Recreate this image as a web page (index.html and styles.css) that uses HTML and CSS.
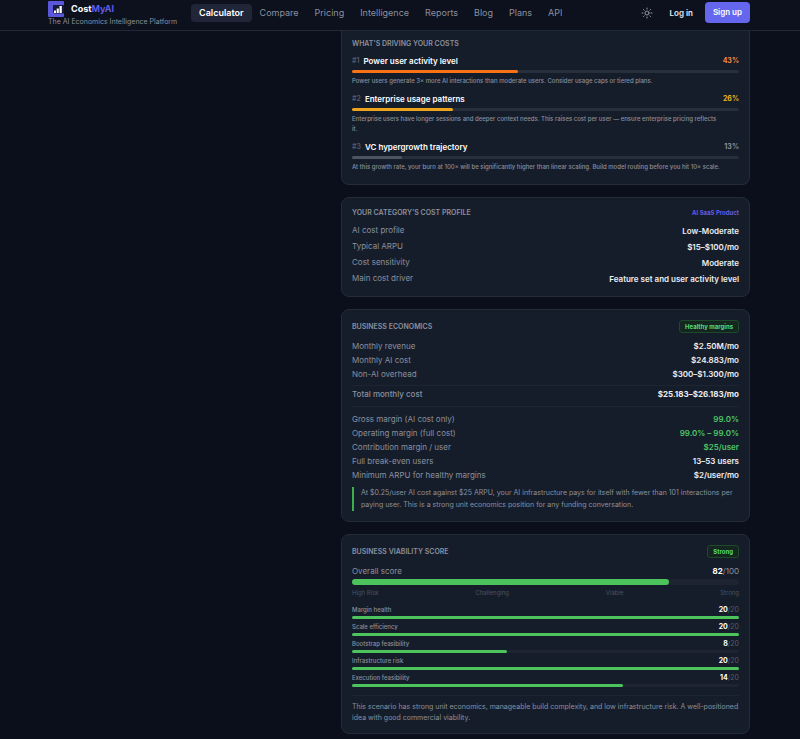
FILE: index.html
```html
<!DOCTYPE html>
<html lang="en">
<head>
    <meta charset="UTF-8">
    <meta name="viewport" content="width=device-width, initial-scale=1.0">
    <title>CostMyAI</title>
    <link rel="stylesheet" href="styles.css">
</head>
<body>

    <header class="header">
        <div class="header-inner">
            <a href="#" class="brand">
                <span class="brand-row">
                    <svg class="logo" viewBox="0 0 16 16" aria-hidden="true">
                        <rect width="16" height="16" rx="1" fill="#5b57dd"/>
                        <path d="M5 4h11v8.500H7a2 2 0 0 1-2-2z" fill="#171a38"/>
                        <path d="M6 9.500h2V12H6zM8.700 7.500h2.100V12H8.700zM11.500 5h2.300v7h-2.300z" fill="#fff"/>
                    </svg>
                    <span class="brand-name">Cost<span>MyAI</span></span>
                </span>
                <span class="tagline">The AI Economics Intelligence Platform</span>
            </a>
            <nav class="nav">
                <a href="#" class="active">Calculator</a>
                <a href="#">Compare</a>
                <a href="#">Pricing</a>
                <a href="#">Intelligence</a>
                <a href="#">Reports</a>
                <a href="#">Blog</a>
                <a href="#">Plans</a>
                <a href="#">API</a>
            </nav>
            <div class="actions">
                <button class="theme" aria-label="Toggle theme">
                    <svg viewBox="0 0 24 24" fill="none" stroke="currentColor" stroke-width="2" stroke-linecap="round">
                        <circle cx="12" cy="12" r="4"/>
                        <path d="M12 2v2M12 20v2M4.900 4.900l1.400 1.400M17.700 17.700l1.400 1.400M2 12h2M20 12h2M6.300 17.700l-1.400 1.400M19.100 4.900l-1.400 1.400"/>
                    </svg>
                </button>
                <button class="login">Log in</button>
                <button class="signup">Sign up</button>
            </div>
        </div>
    </header>

    <main class="layout">
        <div class="results">

            <section class="card card-first">
                <h2>What's driving your costs</h2>
                <div class="drivers">
                    <div class="driver orange">
                        <div class="driver-head">
                            <span class="rank">#1</span>
                            <h3>Power user activity level</h3>
                            <span class="percent">43%</span>
                        </div>
                        <div class="bar"><div class="fill" style="width: 43%"></div></div>
                        <p>Power users generate 3× more AI interactions than moderate users. Consider usage caps or tiered plans.</p>
                    </div>
                    <div class="driver amber">
                        <div class="driver-head">
                            <span class="rank">#2</span>
                            <h3>Enterprise usage patterns</h3>
                            <span class="percent">26%</span>
                        </div>
                        <div class="bar"><div class="fill" style="width: 26%"></div></div>
                        <p>Enterprise users have longer sessions and deeper context needs. This raises cost per user — ensure enterprise pricing reflects<br>it.</p>
                    </div>
                    <div class="driver grey">
                        <div class="driver-head">
                            <span class="rank">#3</span>
                            <h3>VC hypergrowth trajectory</h3>
                            <span class="percent">13%</span>
                        </div>
                        <div class="bar"><div class="fill" style="width: 13%"></div></div>
                        <p>At this growth rate, your burn at 100× will be significantly higher than linear scaling. Build model routing before you hit 10× scale.</p>
                    </div>
                </div>
            </section>

            <section class="card profile">
                <div class="card-head">
                    <h2>Your category's cost profile</h2>
                    <span class="category">AI SaaS Product</span>
                </div>
                <dl class="rows">
                    <div><dt>AI cost profile</dt><dd>Low-Moderate</dd></div>
                    <div><dt>Typical ARPU</dt><dd>$15–$100/mo</dd></div>
                    <div><dt>Cost sensitivity</dt><dd>Moderate</dd></div>
                    <div><dt>Main cost driver</dt><dd>Feature set and user activity level</dd></div>
                </dl>
            </section>

            <section class="card">
                <div class="card-head">
                    <h2>Business economics</h2>
                    <span class="badge">Healthy margins</span>
                </div>
                <dl class="rows">
                    <div><dt>Monthly revenue</dt><dd>$2.50M/mo</dd></div>
                    <div><dt>Monthly AI cost</dt><dd>$24.883/mo</dd></div>
                    <div><dt>Non-AI overhead</dt><dd>$300–$1.300/mo</dd></div>
                    <div class="total"><dt>Total monthly cost</dt><dd>$25.183–$26.183/mo</dd></div>
                    <div><dt>Gross margin (AI cost only)</dt><dd class="good">99.0%</dd></div>
                    <div><dt>Operating margin (full cost)</dt><dd class="good">99.0% – 99.0%</dd></div>
                    <div><dt>Contribution margin / user</dt><dd class="good">$25/user</dd></div>
                    <div><dt>Full break-even users</dt><dd>13–53 users</dd></div>
                    <div><dt>Minimum ARPU for healthy margins</dt><dd>$2/user/mo</dd></div>
                </dl>
                <p class="note">At $0.25/user AI cost against $25 ARPU, your AI infrastructure pays for itself with fewer than 101 interactions per paying user. This is a strong unit economics position for any funding conversation.</p>
            </section>

            <section class="card">
                <div class="card-head">
                    <h2>Business viability score</h2>
                    <span class="badge">Strong</span>
                </div>
                <div class="overall">
                    <span>Overall score</span>
                    <span><b>82</b>/100</span>
                </div>
                <div class="bar bar-big"><div class="fill" style="width: 82%"></div></div>
                <div class="scale">
                    <span>High Risk</span>
                    <span>Challenging</span>
                    <span>Viable</span>
                    <span>Strong</span>
                </div>
                <div class="scores">
                    <div class="score">
                        <div class="score-head"><span>Margin health</span><span class="points"><b>20</b>/20</span></div>
                        <div class="bar"><div class="fill" style="width: 100%"></div></div>
                    </div>
                    <div class="score">
                        <div class="score-head"><span>Scale efficiency</span><span class="points"><b>20</b>/20</span></div>
                        <div class="bar"><div class="fill" style="width: 100%"></div></div>
                    </div>
                    <div class="score">
                        <div class="score-head"><span>Bootstrap feasibility</span><span class="points"><b>8</b>/20</span></div>
                        <div class="bar"><div class="fill" style="width: 40%"></div></div>
                    </div>
                    <div class="score">
                        <div class="score-head"><span>Infrastructure risk</span><span class="points"><b>20</b>/20</span></div>
                        <div class="bar"><div class="fill" style="width: 100%"></div></div>
                    </div>
                    <div class="score">
                        <div class="score-head"><span>Execution feasibility</span><span class="points"><b>14</b>/20</span></div>
                        <div class="bar"><div class="fill" style="width: 70%"></div></div>
                    </div>
                </div>
                <p class="summary">This scenario has strong unit economics, manageable build complexity, and low infrastructure risk. A well-positioned idea with good commercial viability.</p>
            </section>

        </div>
    </main>

</body>
</html>
```
FILE: styles.css
```css
* {
    box-sizing: border-box;
    margin: 0;
    padding: 0;
}

body {
    font-family: Inter, "Liberation Sans", sans-serif;
    font-size: 8px;
    line-height: 14px;
    color: #8a909e;
    background-color: #0a0f1b;
}

a {
    color: inherit;
    text-decoration: none;
}

button {
    font: inherit;
    color: inherit;
    background: none;
    border: none;
    cursor: pointer;
}

/* Header */
.header {
    background-color: #0c111d;
    border-bottom: 1px solid #222838;
}

.header-inner {
    display: flex;
    align-items: flex-start;
    height: 30px;
    padding: 0 50px 0 48px;
}

.brand {
    display: flex;
    flex-direction: column;
    width: 143px;
    padding-top: 1px;
}

.brand-row {
    display: flex;
    align-items: center;
    gap: 7px;
}

.logo {
    width: 16px;
    height: 16px;
}

.brand-name {
    font-size: 9px;
    font-weight: 700;
    color: #fff;
}

.brand-name span {
    color: #5f5ce6;
}

.tagline {
    font-size: 7px;
    line-height: 10px;
    white-space: nowrap;
}

.nav {
    display: flex;
    padding-top: 4px;
    font-size: 9px;
    line-height: 18px;
}

.nav a {
    padding: 0 8px;
    border-radius: 4px;
}

.nav .active {
    color: #fff;
    font-weight: 600;
    background-color: #202637;
}

.actions {
    display: flex;
    align-items: center;
    gap: 12px;
    margin-left: auto;
    padding-top: 2px;
    color: #e8eaf0;
    font-weight: 600;
}

.theme {
    display: flex;
    margin-right: 4px;
    color: #9297a4;
}

.theme svg {
    width: 12px;
    height: 12px;
}

.signup {
    padding: 0 8px;
    line-height: 21px;
    color: #fff;
    background-color: #6466ee;
    border-radius: 4px;
}

/* Page */
.layout {
    display: grid;
    grid-template-columns: 278fr 409fr;
    gap: 13px;
    padding: 0 50px 6px;
}

.results {
    grid-column: 2;
    display: flex;
    flex-direction: column;
    gap: 12px;
}

.card {
    padding: 10px;
    background-color: #161d2a;
    border: 1px solid #242b39;
    border-radius: 8px;
}

/* continues up behind the header */
.card-first {
    padding-top: 8px;
    padding-bottom: 12px;
    border-top: none;
    border-radius: 0 0 8px 8px;
}

h2 {
    font-size: 7px;
    font-weight: 600;
    line-height: 10px;
    text-transform: uppercase;
}

.card-head {
    display: flex;
    justify-content: space-between;
    align-items: center;
    margin-bottom: 6px;
}

.bar {
    height: 3px;
    background-color: #272e3c;
    border-radius: 3px;
}

.fill {
    height: 100%;
    background-color: #4cc35b;
    border-radius: 3px;
}

/* Cost drivers */
.drivers {
    display: flex;
    flex-direction: column;
    gap: 6px;
    margin-top: 5px;
}

.driver-head {
    display: flex;
    gap: 4px;
    margin-bottom: 2px;
}

.rank {
    font-size: 7px;
    font-weight: 600;
    color: #555c6b;
}

h3 {
    font-size: 8px;
    font-weight: 600;
    color: #fff;
}

.percent {
    margin-left: auto;
    font-size: 7px;
    font-weight: 700;
}

.driver p {
    margin-top: 3px;
    font-size: 6px;
    font-weight: 500;
    line-height: 10px;
}

.orange .percent { color: #f5883f; }
.orange .fill { background-color: #f97316; }
.amber .percent { color: #eab41e; }
.amber .fill { background-color: #eda31c; }
.grey .fill { background-color: #4c5361; }

/* Label and value rows */
.rows div {
    display: flex;
    justify-content: space-between;
}

.rows dd {
    font-weight: 600;
    color: #eceef2;
}

.rows .good {
    color: #4cc766;
}

.rows .total {
    margin: 4px 0 5px;
    padding: 1px 0 5px;
    border-top: 1px solid #1e2532;
    border-bottom: 1px solid #1e2532;
}

.total dt {
    font-weight: 500;
}

.rows .total dd {
    font-weight: 700;
}

.profile {
    padding-bottom: 9px;
}

.profile .card-head {
    margin-bottom: 5px;
}

.profile dd {
    line-height: 16px;
}

.category {
    font-size: 6px;
    font-weight: 700;
    line-height: 10px;
    color: #5f5ce6;
}

.badge {
    padding: 0 5px;
    font-size: 6px;
    font-weight: 700;
    line-height: 11px;
    color: #57dd78;
    background-color: #14261f;
    border: 1px solid #1d4a2b;
    border-radius: 3px;
}

.note {
    margin-top: 5px;
    padding-left: 7px;
    font-size: 7px;
    line-height: 12px;
    border-left: 2px solid #3fae4c;
}

/* Viability score */
.overall,
.scale,
.score-head {
    display: flex;
    justify-content: space-between;
}

.overall b,
.points b {
    color: #fff;
}

.bar-big {
    height: 6px;
    margin-top: 1px;
}

.bar-big,
.score .bar {
    background-color: #1e2432;
}

.scale {
    margin-top: 3px;
    font-size: 6px;
    line-height: 10px;
    color: #4b5261;
}

.scores {
    display: flex;
    flex-direction: column;
    gap: 3px;
    margin-top: 7px;
}

.score-head {
    margin-bottom: 1px;
    font-size: 6px;
    font-weight: 500;
    line-height: 10px;
}

.points {
    font-size: 7px;
    font-weight: 400;
    color: #555c6b;
}

.summary {
    margin-top: 8px;
    padding-top: 5px;
    font-size: 7px;
    line-height: 11px;
    border-top: 1px solid #1e2532;
}
```
